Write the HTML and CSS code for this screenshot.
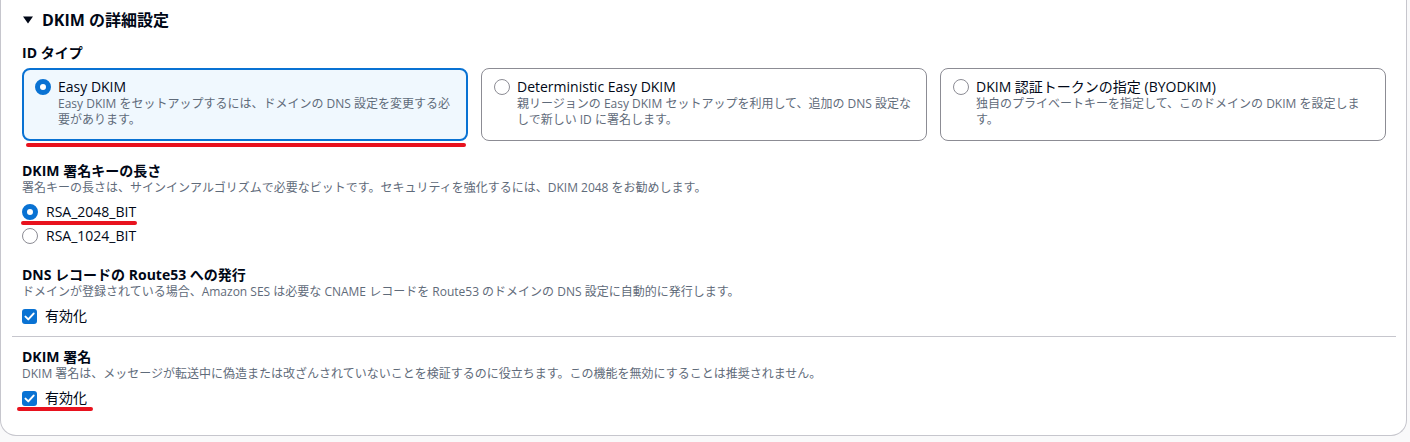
FILE: index.html
```html
<!DOCTYPE html>
<html lang="ja">
<head>
<meta charset="utf-8">
<title>DKIM の詳細設定</title>
<link rel="stylesheet" href="styles.css">
</head>
<body>
<div class="panel">
  <div class="section-head">
    <svg class="caret" width="10" height="8" viewBox="0 0 10 8"><path d="M0 0.5h10L5 7.5z"/></svg>
    <h3 class="section-title">DKIM の詳細設定</h3>
  </div>

  <div class="field field-id">
    <div class="label">ID タイプ</div>
    <div class="tiles">
      <div class="tile selected mark-tile">
        <span class="radio on"></span>
        <div class="tile-text">
          <div class="tile-title">Easy DKIM</div>
          <div class="tile-desc">Easy DKIM をセットアップするには、ドメインの DNS 設定を変更する必要があります。</div>
        </div>
      </div>
      <div class="tile">
        <span class="radio"></span>
        <div class="tile-text">
          <div class="tile-title">Deterministic Easy DKIM</div>
          <div class="tile-desc">親リージョンの Easy DKIM セットアップを利用して、追加の DNS 設定なしで新しい ID に署名します。</div>
        </div>
      </div>
      <div class="tile">
        <span class="radio"></span>
        <div class="tile-text">
          <div class="tile-title">DKIM 認証トークンの指定 (BYODKIM)</div>
          <div class="tile-desc">独自のプライベートキーを指定して、このドメインの DKIM を設定します。</div>
        </div>
      </div>
    </div>
  </div>

  <div class="field field-key">
    <div class="label">DKIM 署名キーの長さ</div>
    <div class="desc">署名キーの長さは、サインインアルゴリズムで必要なビットです。セキュリティを強化するには、DKIM 2048 をお勧めします。</div>
    <div class="controls">
      <div class="option-row"><span class="option mark-radio"><span class="radio on"></span><span class="option-label">RSA_2048_BIT</span></span></div>
      <div class="option-row"><span class="option"><span class="radio"></span><span class="option-label">RSA_1024_BIT</span></span></div>
    </div>
  </div>

  <div class="field field-dns">
    <div class="label">DNS レコードの Route53 への発行</div>
    <div class="desc">ドメインが登録されている場合、Amazon SES は必要な CNAME レコードを Route53 のドメインの DNS 設定に自動的に発行します。</div>
    <div class="controls">
      <div class="option-row"><span class="option"><span class="checkbox"><svg width="11" height="9" viewBox="0 0 11 9"><path d="M1.5 4.6l2.8 2.8L9.6 1.6" fill="none" stroke="#fff" stroke-width="2" stroke-linecap="round" stroke-linejoin="round"/></svg></span><span class="option-label">有効化</span></span></div>
    </div>
  </div>

  <div class="divider"></div>

  <div class="field field-sign">
    <div class="label">DKIM 署名</div>
    <div class="desc">DKIM 署名は、メッセージが転送中に偽造または改ざんされていないことを検証するのに役立ちます。この機能を無効にすることは推奨されません。</div>
    <div class="controls">
      <div class="option-row"><span class="option mark-check"><span class="checkbox"><svg width="11" height="9" viewBox="0 0 11 9"><path d="M1.5 4.6l2.8 2.8L9.6 1.6" fill="none" stroke="#fff" stroke-width="2" stroke-linecap="round" stroke-linejoin="round"/></svg></span><span class="option-label">有効化</span></span></div>
    </div>
  </div>
</div>
</body>
</html>
```

FILE: styles.css
```css
html, body {
  margin: 0;
  padding: 0;
  background: #f9f9fa;
}

body {
  font-family: "Open Sans", "Noto Sans CJK JP", sans-serif;
  color: #000716;
  width: 1410px;
  height: 442px;
  overflow: hidden;
}

.panel {
  box-sizing: border-box;
  width: 1407px;
  background: #ffffff;
  border: 1px solid #c6c6cd;
  border-top: none;
  border-radius: 0 0 16px 16px;
  padding: 10px 20px 25px 21px;
}

.section-head {
  display: flex;
  align-items: center;
  height: 20px;
}

.caret {
  fill: #000716;
  margin-left: 1px;
  margin-right: 9px;
}

.section-title {
  margin: 0;
  font-size: 16px;
  line-height: 20px;
  font-weight: 700;
}

.label {
  font-size: 14px;
  line-height: 18px;
  font-weight: 700;
  color: #000716;
}

.desc {
  font-size: 12px;
  line-height: 16px;
  color: #5f6b7a;
}

.field-id {
  margin-top: 14px;
}

.tiles {
  margin-top: 6px;
  display: grid;
  grid-template-columns: repeat(3, 1fr);
  column-gap: 13px;
}

.tile {
  position: relative;
  display: flex;
  align-items: flex-start;
  gap: 7px;
  border: 1px solid #8c8c94;
  border-radius: 8px;
  padding: 9px 12px 12px 12px;
  background: #ffffff;
}

.tile.selected {
  border: 2px solid #0972d3;
  padding: 8px 11px 11px 11px;
  background: #f0f8fe;
}

.tile .radio {
  margin-top: 1px;
}

.tile-text {
  flex: 1;
  min-width: 0;
}

.tile-title {
  font-size: 14px;
  line-height: 18px;
  color: #000716;
}

.tile-desc {
  font-size: 12px;
  line-height: 16px;
  color: #5f6b7a;
}

.radio {
  flex: none;
  box-sizing: border-box;
  display: inline-block;
  width: 16px;
  height: 16px;
  border-radius: 50%;
  border: 1.5px solid #8c8c94;
  background: #ffffff;
}

.radio.on {
  border: 5px solid #0972d3;
}

.checkbox {
  flex: none;
  box-sizing: border-box;
  width: 15px;
  height: 15px;
  border-radius: 3px;
  background: #0972d3;
  display: inline-flex;
  align-items: center;
  justify-content: center;
}

.field-key {
  margin-top: 21px;
}

.field-dns {
  margin-top: 18px;
}

.field-sign {
  margin-top: 11px;
}

.controls {
  margin-top: 4px;
}

.option-row {
  height: 24px;
  display: flex;
  align-items: center;
}

.option {
  position: relative;
  display: inline-flex;
  align-items: center;
  gap: 8px;
  height: 24px;
}

.option-label {
  font-size: 14px;
  line-height: 18px;
  color: #000716;
}

.divider {
  height: 1px;
  background: #c6c6cd;
  margin: 8px -10px 0 -10px;
}

/* red annotation underlines drawn over the screenshot */
.mark-tile::after,
.mark-radio::after,
.mark-check::after {
  content: "";
  position: absolute;
  height: 4px;
  background: #e8121e;
  border-radius: 2px;
}

.mark-tile::after {
  left: 2px;
  right: 0;
  bottom: -8px;
}

.mark-radio::after {
  left: -1px;
  right: -1px;
  top: 21px;
}

.mark-check::after {
  left: -5px;
  right: -6px;
  top: 21px;
}
```
